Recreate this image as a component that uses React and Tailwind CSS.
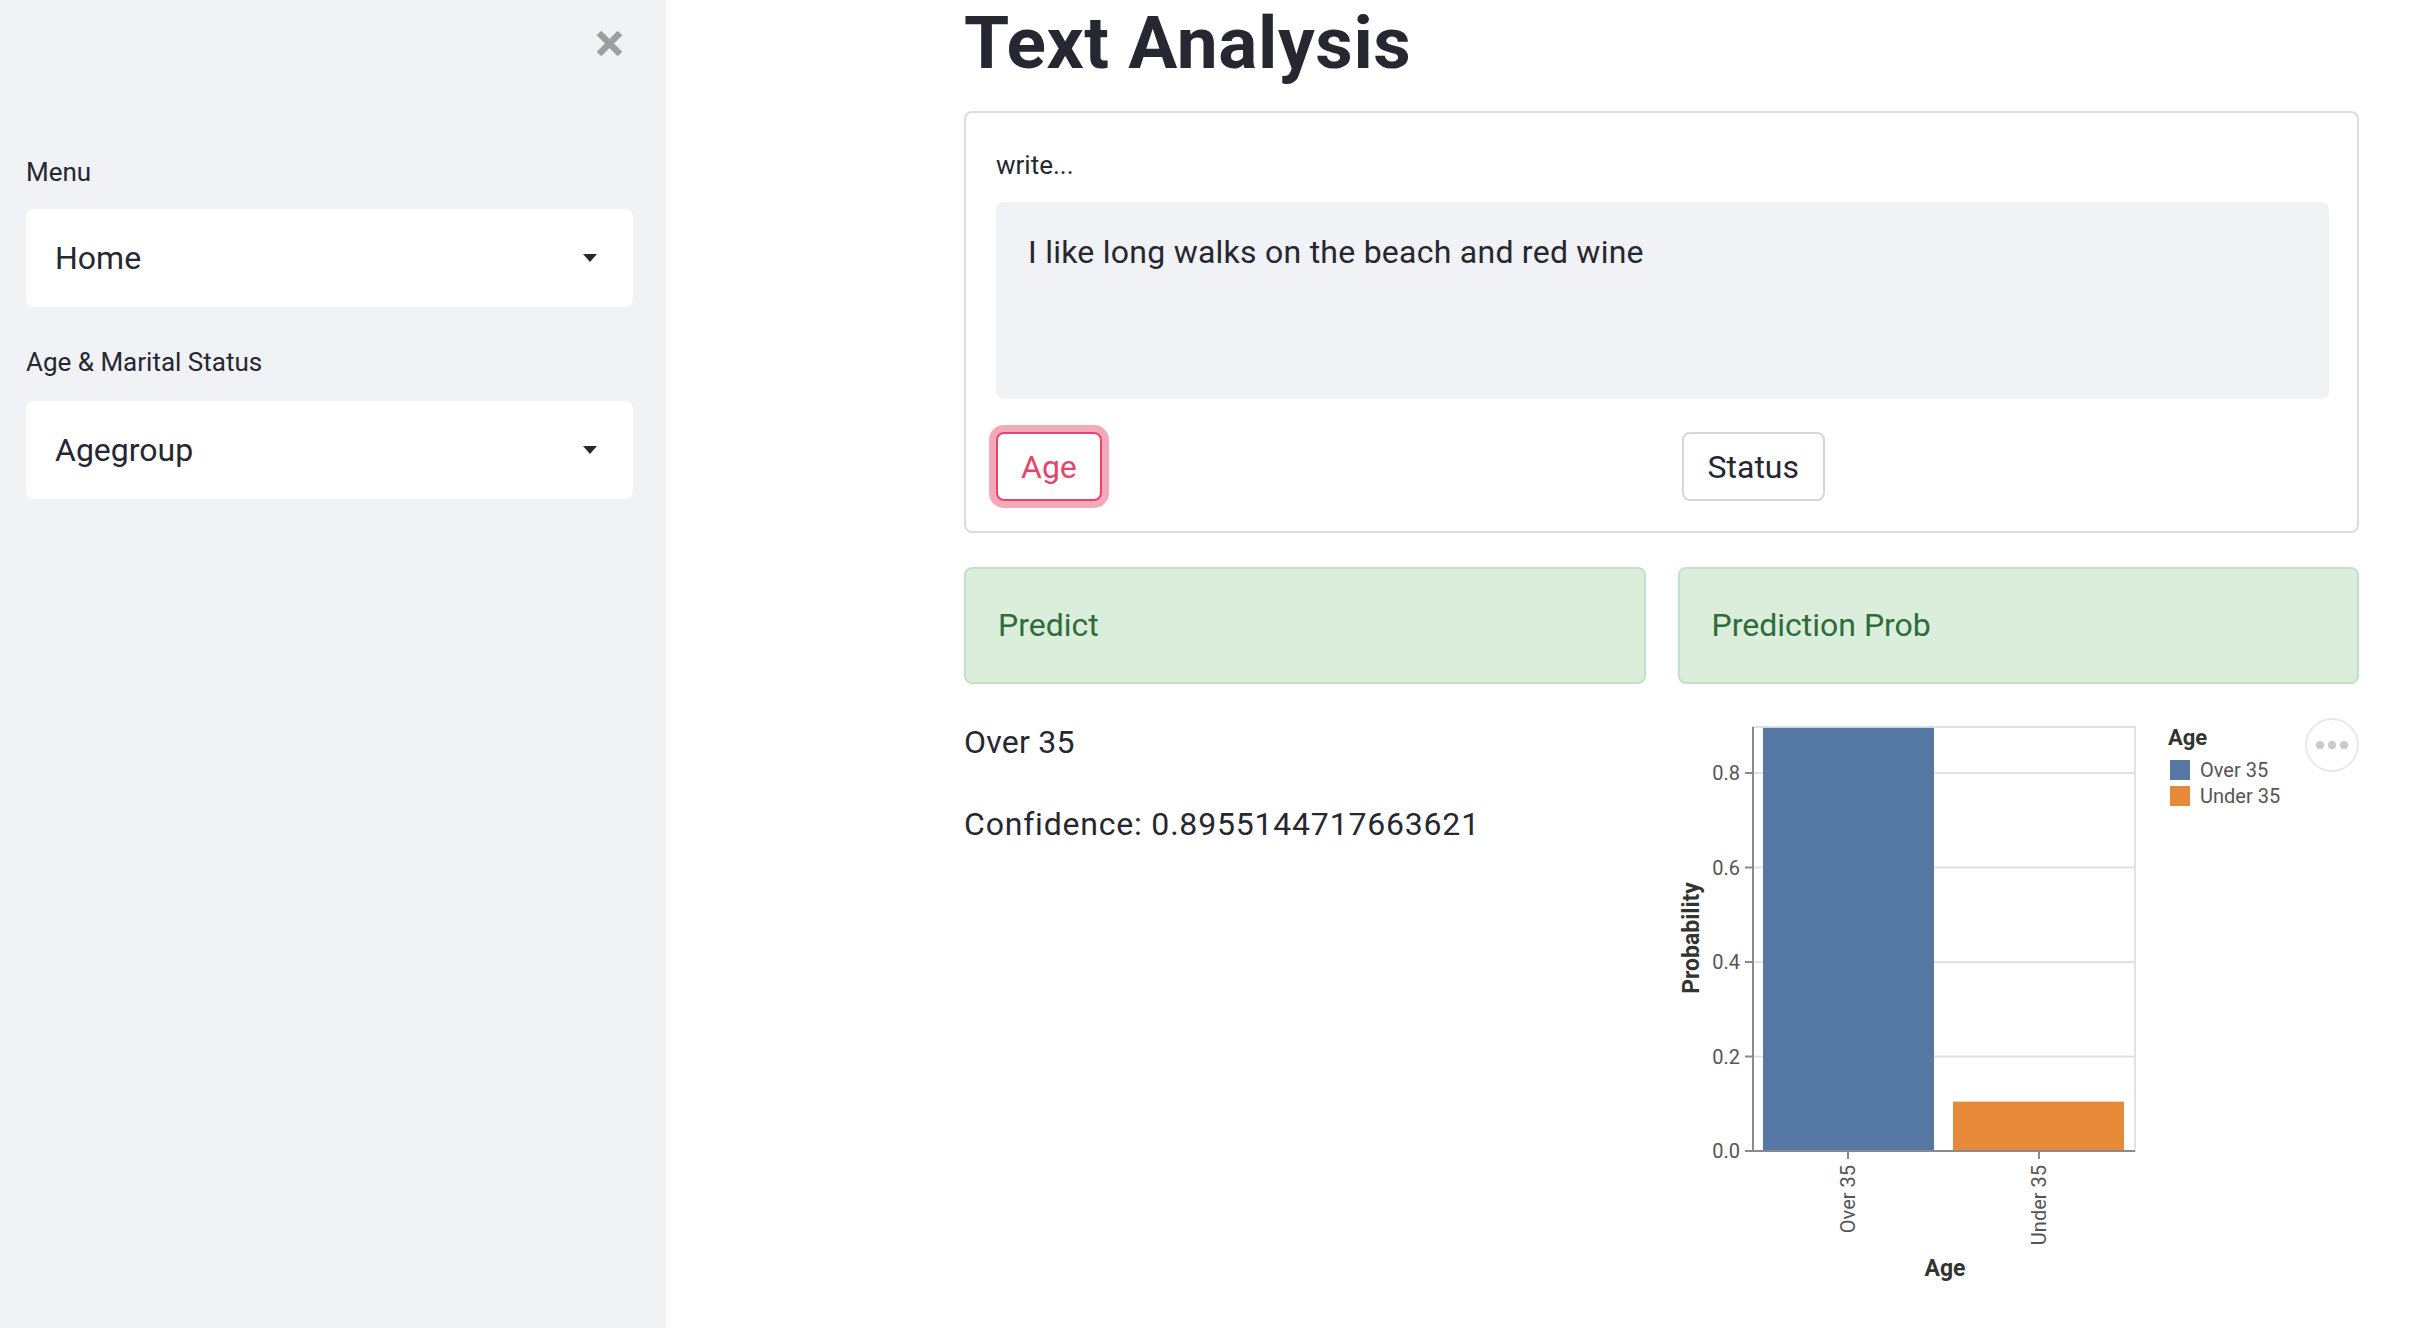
import React from "react";

function Select({ label }) {
  return (
    <div className="flex items-center justify-between h-[98px] rounded-[8px] bg-white pl-[29px] pr-[36px]">
      <span className="text-[32px] text-[#262730]">{label}</span>
      <svg width="14" height="8" viewBox="0 0 14 8">
        <path d="M0 0 L14 0 L7 8 Z" fill="#262730" />
      </svg>
    </div>
  );
}

function Chart() {
  const base = 451;
  const k = 472.5;
  const ticks = [0, 0.2, 0.4, 0.6, 0.8];
  return (
    <svg width="681" height="600" viewBox="0 0 681 600" className="block">
      {ticks.slice(1).map((v) => (
        <line key={v} x1="75" x2="457" y1={base - v * k} y2={base - v * k} stroke="#e2e2e2" strokeWidth="2" />
      ))}
      <rect x="75" y="27" width="382" height="424" fill="none" stroke="#e2e2e2" strokeWidth="2" />
      <rect x="85" y={base - 0.8955 * k} width="171" height={0.8955 * k} fill="#5577a4" />
      <rect x="275" y={base - 0.1045 * k} width="171" height={0.1045 * k} fill="#e68a3a" />
      <line x1="75" x2="75" y1="27" y2={base} stroke="#8a8a8a" strokeWidth="2" />
      <line x1="75" x2="457" y1={base} y2={base} stroke="#8a8a8a" strokeWidth="2" />
      {ticks.map((v) => (
        <g key={v}>
          <line x1="67" x2="75" y1={base - v * k} y2={base - v * k} stroke="#8a8a8a" strokeWidth="2" />
          <text x="62" y={base - v * k} textAnchor="end" dominantBaseline="central" fontSize="20" fill="#555" fontFamily="Roboto, sans-serif">
            {v.toFixed(1)}
          </text>
        </g>
      ))}
      {[
        [170, "Over 35"],
        [361, "Under 35"],
      ].map(([x, t]) => (
        <g key={t}>
          <line x1={x} x2={x} y1={base} y2={base + 8} stroke="#8a8a8a" strokeWidth="2" />
          <text transform={`translate(${x},${base + 14}) rotate(-90)`} textAnchor="end" dominantBaseline="central" fontSize="20" fill="#555" fontFamily="Roboto, sans-serif">
            {t}
          </text>
        </g>
      ))}
      <text x="267" y="568" textAnchor="middle" dominantBaseline="central" fontSize="23" fontWeight="700" fill="#333" fontFamily="Roboto, sans-serif">
        Age
      </text>
      <text transform="translate(13,238) rotate(-90)" textAnchor="middle" dominantBaseline="central" fontSize="23" fontWeight="700" fill="#333" fontFamily="Roboto, sans-serif">
        Probability
      </text>
      <text x="490" y="45" fontSize="22" fontWeight="700" fill="#333" fontFamily="Roboto, sans-serif">
        Age
      </text>
      <rect x="492" y="60" width="20" height="20" fill="#5577a4" />
      <rect x="492" y="86" width="20" height="20" fill="#e68a3a" />
      <text x="522" y="70" dominantBaseline="central" fontSize="20" fill="#555" fontFamily="Roboto, sans-serif">
        Over 35
      </text>
      <text x="522" y="96" dominantBaseline="central" fontSize="20" fill="#555" fontFamily="Roboto, sans-serif">
        Under 35
      </text>
      <circle cx="654" cy="45" r="26" fill="#fff" stroke="#e8e8e8" strokeWidth="2" />
      <circle cx="642" cy="45" r="4" fill="#c9c9c9" />
      <circle cx="654" cy="45" r="4" fill="#c9c9c9" />
      <circle cx="666" cy="45" r="4" fill="#c9c9c9" />
    </svg>
  );
}

export default function App() {
  return (
    <div className="flex w-[2416px] min-h-[1328px] bg-white font-['Roboto',sans-serif] text-[#262730]">
      <aside className="w-[666px] shrink-0 bg-[#f0f2f6] pl-[26px] pr-[33px] pt-[30px]">
        <div className="flex justify-end pr-[10px]">
          <svg width="27" height="27" viewBox="0 0 27 27">
            <path d="M3 3L24 24M24 3L3 24" stroke="#9e9e9e" strokeWidth="6.5" />
          </svg>
        </div>
        <div className="mt-[95px] mb-[17px] text-[26px] leading-[40px]">Menu</div>
        <Select label="Home" />
        <div className="mt-[35px] mb-[19px] text-[26px] leading-[40px]">Age &amp; Marital Status</div>
        <Select label="Agegroup" />
      </aside>
      <main className="flex-1 pl-[298px]">
        <div className="w-[1395px]">
          <h1 className="text-[73px] leading-[86px] font-bold tracking-[0.6px] text-[#262730]">Text Analysis</h1>
          <div className="mt-[25px] rounded-[8px] border-2 border-[#dcdcdc] pl-[30px] pr-[28px] pt-[30px] pb-[30px]">
            <div className="mb-[15px] text-[26px] leading-[44px]">write...</div>
            <div className="h-[197px] rounded-[8px] bg-[#f0f2f6] pl-[32px] pt-[26px] text-[32px] leading-[48px] tracking-[0.25px]">
              I like long walks on the beach and red wine
            </div>
            <div className="mt-[33px] grid grid-cols-2 gap-[38px]">
              <div>
                <button className="h-[69px] rounded-[8px] border-2 border-[#e8456c] bg-white px-[23px] text-[32px] text-[#e8436b] shadow-[0_0_0_7px_#f4a9ba]">
                  Age
                </button>
              </div>
              <div>
                <button className="h-[69px] rounded-[8px] border-2 border-[#d6d6d6] bg-white px-[24px] text-[32px] text-[#262730]">
                  Status
                </button>
              </div>
            </div>
          </div>
          <div className="mt-[34px] grid grid-cols-2 gap-[32px]">
            <div>
              <div className="rounded-[8px] border-2 border-[#bfe3c6] bg-[#dbeedb] px-[32px] py-[32px] text-[32px] leading-[49px] text-[#2e6c3a]">
                Predict
              </div>
              <p className="mt-[33px] text-[32px] leading-[51px] tracking-[0.25px]">Over 35</p>
              <p className="mt-[31px] text-[32px] leading-[51px] tracking-[0.8px]">Confidence: 0.8955144717663621</p>
            </div>
            <div>
              <div className="rounded-[8px] border-2 border-[#bfe3c6] bg-[#dbeedb] px-[32px] py-[32px] text-[32px] leading-[49px] text-[#2e6c3a]">
                Prediction Prob
              </div>
              <div className="mt-[16px]">
                <Chart />
              </div>
            </div>
          </div>
        </div>
      </main>
    </div>
  );
}
